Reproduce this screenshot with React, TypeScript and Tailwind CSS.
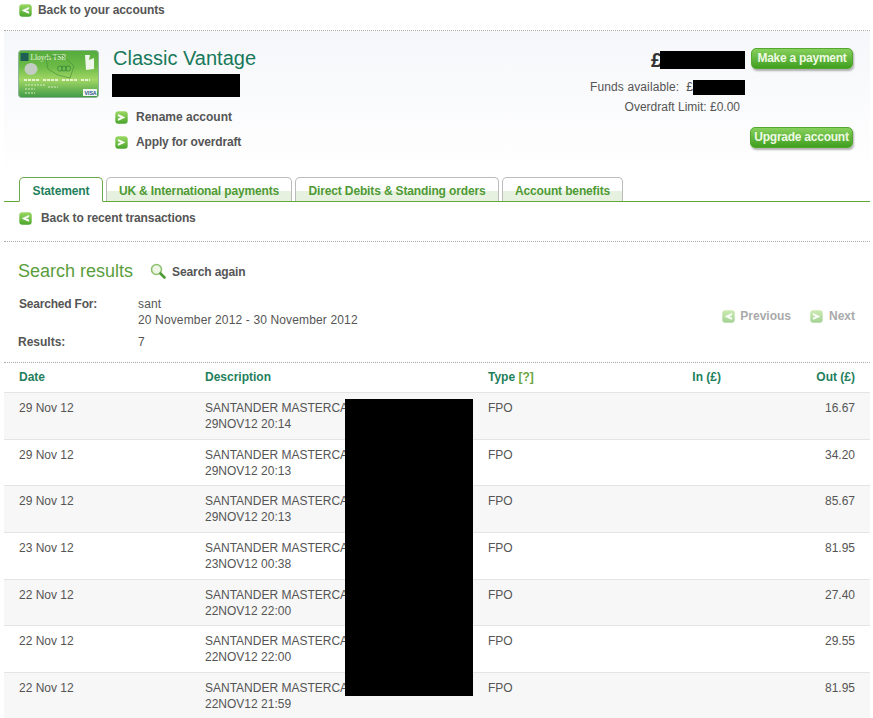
import React from "react";

function Arrow({ dir, faded }: { dir: "l" | "r"; faded?: boolean }) {
  return (
    <svg width="13" height="13" viewBox="0 0 13 13" className={"shrink-0 " + (faded ? "opacity-50" : "")}>
      <defs>
        <linearGradient id={"ag" + dir} x1="0" y1="0" x2="0" y2="1">
          <stop offset="0" stopColor="#9ad864" />
          <stop offset="1" stopColor="#4aa52c" />
        </linearGradient>
      </defs>
      <rect x="0.3" y="0.3" width="12.4" height="12.4" rx="3" fill={"url(#ag" + dir + ")"} />
      <path
        d={dir === "l" ? "M9.8 3.4 L3.2 6.4 L9.8 9.4 L9.8 7.8 L6.6 6.4 L9.8 5 Z" : "M3.2 3.4 L9.8 6.4 L3.2 9.4 L3.2 7.8 L6.4 6.4 L3.2 5 Z"}
        fill="#fff"
        stroke="#fff"
        strokeWidth="0.6"
        strokeLinejoin="round"
      />
    </svg>
  );
}

function Dotted({ className = "" }: { className?: string }) {
  return <div className={"border-t border-dotted border-[#aaa] ml-[4px] mr-[3px] " + className} />;
}

function GreenButton({ children, className = "" }: { children: React.ReactNode; className?: string }) {
  return (
    <div
      className={
        "flex items-center justify-center h-[21px] pb-[2px] rounded-[5px] border border-[#55a82f] bg-gradient-to-b from-[#86d05c] to-[#3f9f1c] text-[#eefae2] font-bold text-[12px] tracking-[-0.25px] shadow-[1px_2px_2px_rgba(0,0,0,0.3)] " +
        className
      }
    >
      {children}
    </div>
  );
}

function Card() {
  return (
    <svg width="81" height="48" viewBox="0 0 81 48" className="shrink-0">
      <defs>
        <linearGradient id="card" x1="0" y1="0" x2="0" y2="1">
          <stop offset="0" stopColor="#55ab3c" />
          <stop offset="0.35" stopColor="#6dbb48" />
          <stop offset="0.62" stopColor="#a2d765" />
          <stop offset="1" stopColor="#3f9a46" />
        </linearGradient>
      </defs>
      <rect x="0.5" y="0.5" width="80" height="47" rx="3" fill="url(#card)" stroke="#8fb59a" />
      <rect x="2.5" y="3" width="8" height="8" fill="#1f5f55" />
      <text x="12.5" y="10" fontSize="7.4" fontFamily="Liberation Serif, serif" fill="#e8f5df">Lloyds TSB</text>
      <ellipse cx="13" cy="19" rx="6.5" ry="6" fill="#c4cdc4" />
      <path d="M28 8 L44 5 L56 16 L52 28 L40 25 L30 19 Z" fill="none" stroke="#3f8a35" strokeWidth="0.6" />
      <g fill="none" stroke="#2f7f3a" strokeWidth="0.7">
        <circle cx="42" cy="18.5" r="2.6" />
        <circle cx="46" cy="18.5" r="2.6" />
        <circle cx="50" cy="18.5" r="2.6" />
      </g>
      <path d="M67 5 L72 5 L71 10 L76 8 L76 19 L68 20 Z" fill="#eef6ea" />
      <path d="M6 30h66" stroke="#e6f4d0" strokeWidth="2" strokeDasharray="3 1 3 1 3 1 3 4" />
      <path d="M7 35h20M7 39h10M7 43h10M30 37h10" stroke="#d6eebd" strokeWidth="1" strokeDasharray="2 1" />
      <rect x="65" y="39" width="14" height="7" fill="#eef6ee" />
      <text x="66.5" y="45" fontSize="5.2" fontWeight="bold" fontFamily="Liberation Sans, sans-serif" fill="#1f4f8f">VISA</text>
    </svg>
  );
}

function Tab({ label, active, w }: { label: string; active?: boolean; w: string }) {
  return (
    <div
      className={
        "flex items-center justify-center pt-[2px] rounded-t-[5px] border font-bold text-[12px] tracking-[-0.14px] " +
        w +
        " " +
        (active
          ? "h-[25px] -mb-px relative bg-white border-[#6aa84a] border-b-white text-[#1f7f5c]"
          : "h-[24px] border-[#bbb] border-b-0 bg-gradient-to-b from-white from-55% to-[#e6f2df] to-55% text-[#4f9a35]")
      }
    >
      {label}
    </div>
  );
}

const rows = [
  ["29 Nov 12", "29NOV12 20:14", "16.67"],
  ["29 Nov 12", "29NOV12 20:13", "34.20"],
  ["29 Nov 12", "29NOV12 20:13", "85.67"],
  ["23 Nov 12", "23NOV12 00:38", "81.95"],
  ["22 Nov 12", "22NOV12 22:00", "27.40"],
  ["22 Nov 12", "22NOV12 22:00", "29.55"],
  ["22 Nov 12", "22NOV12 21:59", "81.95"],
];

export default function App() {
  return (
    <div className="relative w-[873px] h-[718px] overflow-hidden bg-white text-[12px] leading-[16px] text-[#555] font-['Liberation_Sans',Arial,sans-serif]">
      {/* back link */}
      <div className="flex items-center h-[20px] pl-[19px] gap-[6px] font-bold tracking-[-0.1px]">
        <Arrow dir="l" />
        <span>Back to your accounts</span>
      </div>
      <Dotted className="mt-[10px]" />

      {/* account panel */}
      <div className="ml-[4px] mr-[3px] h-[144px] bg-gradient-to-b from-[#f6f7fa] to-white flex pt-[19px] pl-[14px]">
        <Card />
        <div className="ml-[14px] w-[300px]">
          <div className="text-[20px] leading-[24px] text-[#17795a] mt-[-4px]">Classic Vantage</div>
          <div className="mt-[4px] w-[128px] h-[23px] -ml-px bg-black" />
          <div className="mt-[12px] ml-[2px] flex items-center gap-[8px] font-bold">
            <Arrow dir="r" />
            <span>Rename account</span>
          </div>
          <div className="mt-[9px] ml-[2px] flex items-center gap-[8px] font-bold tracking-[-0.15px]">
            <Arrow dir="r" />
            <span>Apply for overdraft</span>
          </div>
        </div>
        <div className="flex-1 flex flex-col items-end pr-[17px] -mt-[2px]">
          <div className="flex items-center h-[21px]">
            <span className="text-[20px] font-bold text-[#333] leading-[20px] mt-[2px]">£</span>
            <div className="w-[85px] h-[18px] bg-black -ml-[2px] mt-[3px]" />
            <GreenButton className="w-[102px] ml-[6px]">Make a payment</GreenButton>
          </div>
          <div className="flex items-center h-[16px] mt-[10px] pr-[108px] tracking-[0.12px]">
            <span>Funds available:&nbsp;&nbsp;£</span>
            <div className="w-[52px] h-[15px] bg-black" />
          </div>
          <div className="mt-[4px] h-[16px] pr-[113px]">Overdraft Limit: £0.00</div>
          <GreenButton className="w-[103px] mt-[12px]">Upgrade account</GreenButton>
        </div>
      </div>

      {/* tabs */}
      <div className="flex items-end gap-[3px] h-[25px] pl-[19px] mt-[1px] relative">
        <Tab label="Statement" active w="w-[84px]" />
        <Tab label="UK & International payments" w="w-[186px]" />
        <Tab label="Direct Debits & Standing orders" w="w-[204px]" />
        <Tab label="Account benefits" w="w-[121px]" />
      </div>
      <div className="h-px bg-[#62a838] ml-[4px] mr-[3px]" />

      <div className="flex items-center gap-[9px] pl-[19px] mt-[8px] h-[16px] font-bold tracking-[-0.1px]">
        <Arrow dir="l" />
        <span>Back to recent transactions</span>
      </div>
      <Dotted className="mt-[15px]" />

      {/* search results */}
      <div className="flex items-center pl-[18px] mt-[18px] h-[22px]">
        <span className="text-[18px] text-[#5a9e3c]">Search results</span>
        <svg width="16" height="16" viewBox="0 0 16 16" className="ml-[17px]">
          <circle cx="6.5" cy="6.5" r="5" fill="#eef6e6" stroke="#8fc26e" strokeWidth="1.6" />
          <path d="M10.5 10.5 L14.5 14.5" stroke="#4f9a35" strokeWidth="2.6" strokeLinecap="round" />
        </svg>
        <span className="ml-[6px] mt-[1px] font-bold tracking-[-0.1px]">Search again</span>
      </div>

      <div className="flex mt-[14px] pl-[19px]">
        <div className="w-[119px] font-bold tracking-[-0.2px]">Searched For:</div>
        <div className="tracking-[0.14px]">
          <div>sant</div>
          <div>20 November 2012 - 30 November 2012</div>
        </div>
        <div className="ml-auto mr-[18px] mt-[8px] flex items-center font-bold text-[#aaa]">
          <Arrow dir="l" faded />
          <span className="ml-[5px]">Previous</span>
          <span className="ml-[19px]"><Arrow dir="r" faded /></span>
          <span className="ml-[6px]">Next</span>
        </div>
      </div>
      <div className="flex mt-[6px] pl-[18px]">
        <div className="w-[120px] font-bold">Results:</div>
        <div>7</div>
      </div>
      <Dotted className="mt-[12px]" />

      {/* table */}
      <div className="ml-[4px] mr-[3px]">
        <div className="flex items-center h-[30px] pb-[2px] pl-[15px] font-bold text-[#1f7f5c] border-b border-[#e4e4e4]">
          <div className="w-[186px]">Date</div>
          <div className="w-[283px]">Description</div>
          <div className="w-[100px]">
            Type <span className="text-[#6aa83f]">[?]</span>
          </div>
          <div className="w-[133px] text-right">In (£)</div>
          <div className="w-[134px] text-right">Out (£)</div>
        </div>
        {rows.map((r, i) => (
          <div
            key={i}
            className={"flex h-[46.67px] pl-[15px] pt-[7px] border-b border-[#e4e4e4] " + (i % 2 === 0 ? "bg-[#f7f7f7]" : "bg-white")}
          >
            <div className="w-[186px]">{r[0]}</div>
            <div className="w-[283px]">
              <div>SANTANDER MASTERCARD</div>
              <div>{r[1]}</div>
            </div>
            <div className="w-[100px]">FPO</div>
            <div className="w-[133px]" />
            <div className="w-[134px] text-right">{r[2]}</div>
          </div>
        ))}
      </div>

      {/* redaction lying over the table */}
      <div className="absolute left-[345px] top-[399px] w-[128px] h-[297px] bg-black" />
    </div>
  );
}
